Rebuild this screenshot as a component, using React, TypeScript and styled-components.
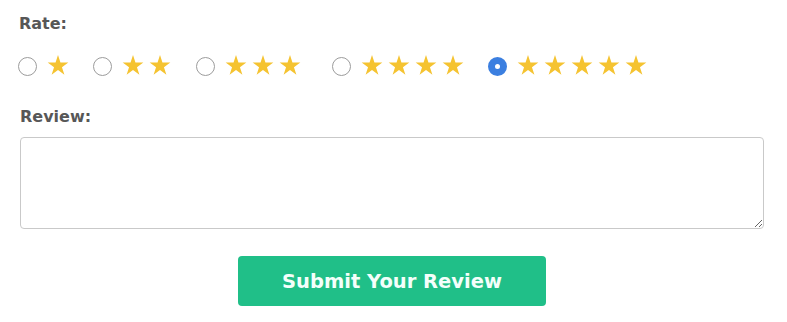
import React, { useState } from 'react';
import styled, { createGlobalStyle } from 'styled-components';

const GlobalStyle = createGlobalStyle`
  html, body {
    margin: 0;
    padding: 0;
    background: #ffffff;
  }
  body {
    font-family: "DejaVu Sans", Verdana, sans-serif;
  }
`;

const Form = styled.form`
  width: 787px;
  box-sizing: border-box;
  padding: 14px 23px 0 20px;
`;

const FieldLabel = styled.label<{ $gap: number; $indent?: number }>`
  display: block;
  margin: 0 0 ${p => p.$gap}px ${p => p.$indent ?? 0}px;
  font-size: 16px;
  line-height: 19px;
  font-weight: bold;
  color: #575757;
`;

const RateRow = styled.div`
  display: flex;
  align-items: flex-start;
  margin: 0 0 31px -2px;
  height: 21px;
`;

const Option = styled.label<{ $after: number }>`
  display: flex;
  align-items: flex-start;
  gap: 10px;
  margin-right: ${p => p.$after}px;
  cursor: pointer;
`;

const Radio = styled.input`
  appearance: none;
  -webkit-appearance: none;
  margin: 2px 0 0;
  width: 19px;
  height: 19px;
  box-sizing: border-box;
  border-radius: 50%;
  border: 1px solid #9c9c9c;
  background: #fff;
  cursor: pointer;

  &:checked {
    border: 7px solid #3b7fe0;
    background: #fff;
  }
`;

const Stars = styled.span`
  display: flex;
  gap: 5px;
`;

const StarIcon = styled.svg`
  display: block;
  width: 22px;
  height: 20px;
  fill: #f5c331;
`;

const TextArea = styled.textarea`
  display: block;
  width: 100%;
  height: 92px;
  box-sizing: border-box;
  border: 1px solid #c9c9c9;
  border-radius: 4px;
  padding: 8px;
  font-family: "DejaVu Sans", sans-serif;
  font-size: 14px;
  margin: 0 0 27px;
  resize: both;
  outline: none;
`;

const SubmitButton = styled.button`
  display: block;
  margin: 0 auto;
  width: 308px;
  height: 50px;
  border: 0;
  border-radius: 4px;
  background: #20bf88;
  color: #f4fffb;
  font-family: "DejaVu Sans", Verdana, sans-serif;
  font-weight: bold;
  font-size: 19.5px;
  cursor: pointer;
`;

function Star() {
  return (
    <StarIcon viewBox="0 0 24 23" aria-hidden="true">
      <polygon points="12,0 14.81,8.63 23.89,8.64 16.55,13.98 19.35,22.61 12,17.28 4.65,22.61 7.45,13.98 0.11,8.64 9.19,8.63" />
    </StarIcon>
  );
}

// space after each option, measured from the page
const ratings = [
  { value: 1, after: 24 },
  { value: 2, after: 25 },
  { value: 3, after: 31 },
  { value: 4, after: 24 },
  { value: 5, after: 0 },
];

export default function App() {
  const [rating, setRating] = useState(5);

  return (
    <>
      <GlobalStyle />
      <Form onSubmit={e => e.preventDefault()}>
        <FieldLabel $gap={22} $indent={-1}>Rate:</FieldLabel>
        <RateRow>
          {ratings.map(r => (
            <Option key={r.value} $after={r.after}>
              <Radio
                type="radio"
                name="rating"
                value={r.value}
                checked={rating === r.value}
                onChange={() => setRating(r.value)}
              />
              <Stars>
                {Array.from({ length: r.value }, (_, i) => <Star key={i} />)}
              </Stars>
            </Option>
          ))}
        </RateRow>
        <FieldLabel $gap={11} htmlFor="review">Review:</FieldLabel>
        <TextArea id="review" />
        <SubmitButton type="submit">Submit Your Review</SubmitButton>
      </Form>
    </>
  );
}
